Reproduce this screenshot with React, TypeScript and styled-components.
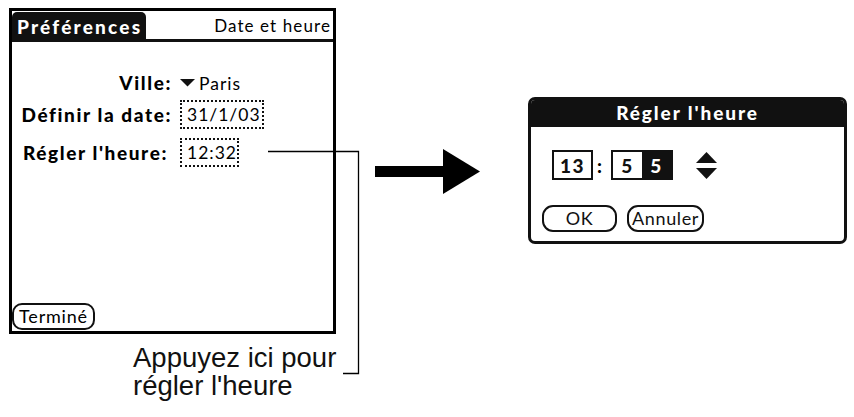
import React from "react";
import styled, { createGlobalStyle } from "styled-components";

const GlobalStyle = createGlobalStyle`
  html, body {
    margin: 0;
    padding: 0;
    background: #fff;
  }
  body {
    font-family: "Lato", "Noto Sans", sans-serif;
    color: #000;
  }
`;

const palmFont = `"Lato", "Noto Sans", sans-serif`;

const Figure = styled.div`
  position: relative;
  width: 854px;
  height: 417px;
  display: flex;
  align-items: flex-start;
  padding: 8px 0 0 9px;
  box-sizing: border-box;
  overflow: hidden;
`;

const LeftColumn = styled.div`
  display: flex;
  flex-direction: column;
  width: 327px;
`;

const Screen = styled.div`
  width: 327px;
  height: 326px;
  border: 3px solid #000;
  box-sizing: border-box;
  display: flex;
  flex-direction: column;
  font-family: ${palmFont};
`;

const Header = styled.div`
  display: flex;
  align-items: stretch;
  height: 30px;
  margin-top: 1px;
`;

const Tab = styled.div`
  width: 134px;
  background: #111;
  color: #fff;
  border-radius: 5px 5px 0 0;
  font-weight: 900;
  font-size: 19px;
  letter-spacing: 2.2px;
  display: flex;
  align-items: center;
  padding: 0 0 2px 5px;
  box-sizing: border-box;
  white-space: nowrap;
`;

const HeaderTitle = styled.div`
  flex: 1;
  border-bottom: 3px solid #111;
  display: flex;
  align-items: center;
  justify-content: flex-end;
  padding-right: 2px;
  font-size: 17px;
  letter-spacing: 1.1px;
  white-space: nowrap;
`;

const Form = styled.div`
  display: grid;
  grid-template-columns: 160px 1fr;
  column-gap: 8px;
  align-items: center;
  margin-top: 29px;
`;

const Label = styled.div<{ $gap?: number; $height: number; $inset?: number }>`
  text-align: right;
  font-weight: 900;
  font-size: 19px;
  letter-spacing: 1.6px;
  height: ${(p) => p.$height}px;
  line-height: ${(p) => p.$height}px;
  margin-top: ${(p) => p.$gap ?? 0}px;
  padding-right: ${(p) => p.$inset ?? 0}px;
  white-space: nowrap;
`;

const Value = styled.div<{ $gap?: number; $height: number }>`
  display: flex;
  align-items: center;
  height: ${(p) => p.$height}px;
  font-size: 17.5px;
  letter-spacing: 1px;
  margin-top: ${(p) => p.$gap ?? 0}px;
`;

const Dropdown = styled.span`
  display: inline-flex;
  align-items: center;
  gap: 4px;
`;

const Field = styled.span<{ $width: number }>`
  display: inline-flex;
  align-items: center;
  width: ${(p) => p.$width}px;
  height: 29px;
  box-sizing: border-box;
  border: 2px dotted #111;
  padding-left: 5px;
`;

const Spacer = styled.div`
  flex: 1;
`;

const DoneButton = styled.button`
  align-self: flex-start;
  width: 83px;
  height: 27px;
  margin: 0 0 1px 0;
  border: 2px solid #111;
  border-radius: 10px;
  background: #fff;
  font-family: ${palmFont};
  font-size: 18px;
  letter-spacing: 0.8px;
  color: #000;
  padding: 0 0 2px;
`;

const Caption = styled.p`
  margin: 10px 0 0 124px;
  font-family: "Liberation Sans", Arial, sans-serif;
  font-size: 27.5px;
  line-height: 28px;
  color: #111;
  white-space: nowrap;
`;

const Arrow = styled.svg`
  margin: 141px 0 0 39px;
  flex-shrink: 0;
`;

const Dialog = styled.div`
  margin: 89px 0 0 48px;
  width: 319px;
  height: 147px;
  border: 3px solid #111;
  border-radius: 7px;
  box-sizing: border-box;
  overflow: hidden;
  display: flex;
  flex-direction: column;
  font-family: ${palmFont};
  flex-shrink: 0;
`;

const DialogTitle = styled.div`
  height: 25px;
  background: #111;
  color: #fff;
  font-weight: 900;
  font-size: 19px;
  letter-spacing: 1.9px;
  display: flex;
  align-items: center;
  justify-content: center;
  padding-bottom: 2px;
`;

const TimeRow = styled.div`
  display: flex;
  align-items: center;
  margin: 23px 0 0 21px;
  height: 30px;
`;

const DigitBox = styled.div`
  display: flex;
  height: 30px;
  border: 2px solid #111;
  box-sizing: border-box;
`;

const Digit = styled.span<{ $width: number; $selected?: boolean }>`
  width: ${(p) => p.$width}px;
  display: flex;
  align-items: center;
  justify-content: center;
  font-weight: 900;
  font-size: 19px;
  letter-spacing: 1.5px;
  background: ${(p) => (p.$selected ? "#111" : "#fff")};
  color: ${(p) => (p.$selected ? "#fff" : "#111")};
`;

const Colon = styled.span`
  width: 18px;
  text-align: center;
  font-weight: 900;
  font-size: 19px;
  padding-right: 5px;
  box-sizing: border-box;
`;

const Stepper = styled.svg`
  margin-left: 23px;
`;

const ButtonRow = styled.div`
  display: flex;
  gap: 10px;
  margin: 25px 0 0 11px;
`;

const DialogButton = styled.button<{ $width: number }>`
  width: ${(p) => p.$width}px;
  height: 27px;
  border: 2px solid #111;
  border-radius: 11px;
  background: #fff;
  font-family: ${palmFont};
  font-size: 18px;
  letter-spacing: 0.6px;
  color: #111;
  padding: 0 0 2px;
`;

const Leader = styled.svg`
  position: absolute;
  left: 0;
  top: 0;
  pointer-events: none;
`;

export default function App() {
  return (
    <>
      <GlobalStyle />
      <Figure>
        <LeftColumn>
          <Screen>
            <Header>
              <Tab>Préférences</Tab>
              <HeaderTitle>Date et heure</HeaderTitle>
            </Header>
            <Form>
              <Label $height={24}>Ville:</Label>
              <Value $height={24}>
                <Dropdown>
                  <svg width="15" height="8" viewBox="0 0 15 8">
                    <polygon points="0,0 15,0 7.5,7.5" fill="#111" />
                  </svg>
                  Paris
                </Dropdown>
              </Value>
              <Label $gap={5} $height={29}>
                Définir la date:
              </Label>
              <Value $gap={5} $height={29}>
                <Field $width={84}>31/1/03</Field>
              </Value>
              <Label $gap={9} $height={29} $inset={4}>
                Régler l'heure:
              </Label>
              <Value $gap={9} $height={29}>
                <Field $width={59}>12:32</Field>
              </Value>
            </Form>
            <Spacer />
            <DoneButton>Terminé</DoneButton>
          </Screen>
          <Caption>
            Appuyez ici pour
            <br />
            régler l'heure
          </Caption>
        </LeftColumn>

        <Arrow width="105" height="45" viewBox="0 0 105 45">
          <rect x="0" y="17" width="70" height="11" fill="#000" />
          <polygon points="68,0 105,22.5 68,45" fill="#000" />
        </Arrow>

        <Dialog>
          <DialogTitle>Régler l'heure</DialogTitle>
          <TimeRow>
            <DigitBox>
              <Digit $width={37}>13</Digit>
            </DigitBox>
            <Colon>:</Colon>
            <DigitBox>
              <Digit $width={29}>5</Digit>
              <Digit $width={29} $selected>
                5
              </Digit>
            </DigitBox>
            <Stepper width="21" height="27" viewBox="0 0 21 27">
              <polygon points="10.5,0 21,11 0,11" fill="#111" />
              <polygon points="0,16 21,16 10.5,27" fill="#111" />
            </Stepper>
          </TimeRow>
          <ButtonRow>
            <DialogButton $width={75}>OK</DialogButton>
            <DialogButton $width={77}>Annuler</DialogButton>
          </ButtonRow>
        </Dialog>

        <Leader width="854" height="417" viewBox="0 0 854 417">
          <polyline
            points="268,151.5 358.5,151.5 358.5,373.5 343,373.5"
            fill="none"
            stroke="#000"
            strokeWidth="1.3"
          />
        </Leader>
      </Figure>
    </>
  );
}
